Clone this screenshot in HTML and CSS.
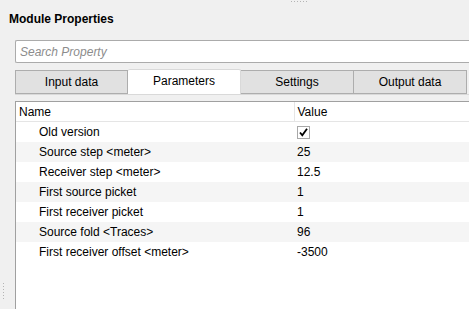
FILE: index.html
```html
<!DOCTYPE html>
<html lang="en">
<head>
  <meta charset="UTF-8">
  <title>Module Properties</title>
  <link rel="stylesheet" href="styles.css">
</head>
<body>
  <div class="grip-top"></div>
  <h1 class="title">Module Properties</h1>

  <div class="body-row">
    <div class="gutter">
      <div class="grip-left"></div>
    </div>

    <div class="main">
      <input class="search" type="text" placeholder="Search Property">

      <div class="tabs">
        <div class="tab">Input data</div>
        <div class="tab active">Parameters</div>
        <div class="tab">Settings</div>
        <div class="tab">Output data</div>
      </div>

      <div class="tab-frame">
        <div class="panel">
          <table class="props">
            <thead>
              <tr>
                <th class="col-name">Name</th>
                <th class="col-value">Value</th>
              </tr>
            </thead>
            <tbody>
              <tr>
                <td class="name">Old version</td>
                <td class="value">
                  <span class="check">
                    <svg width="11" height="11" viewBox="0 0 11 11">
                      <path d="M2 5.5 L4.3 8.3 L9 1.8" fill="none" stroke="#000" stroke-width="1.8"/>
                    </svg>
                  </span>
                </td>
              </tr>
              <tr><td class="name">Source step &lt;meter&gt;</td><td class="value">25</td></tr>
              <tr><td class="name">Receiver step &lt;meter&gt;</td><td class="value">12.5</td></tr>
              <tr><td class="name">First source picket</td><td class="value">1</td></tr>
              <tr><td class="name">First receiver picket</td><td class="value">1</td></tr>
              <tr><td class="name">Source fold &lt;Traces&gt;</td><td class="value">96</td></tr>
              <tr><td class="name">First receiver offset &lt;meter&gt;</td><td class="value">-3500</td></tr>
            </tbody>
          </table>
        </div>
      </div>
    </div>
  </div>
</body>
</html>
```

FILE: styles.css
```css
html, body {
  height: 100%;
}
body {
  margin: 0;
  background-color: #f0f0f0;
  font-family: "Liberation Sans", Arial, sans-serif;
  font-size: 12px;
  color: #000;
  overflow: hidden;
  display: flex;
  flex-direction: column;
}
.grip-top {
  height: 3px;
  width: 18px;
  margin-left: 290px;
  background-image: radial-gradient(circle, #b4b4b4 0.7px, transparent 0.8px);
  background-size: 3px 3px;
}
.title {
  margin: 8px 0 0 9px;
  font-size: 12px;
  line-height: 16px;
  font-weight: bold;
}
.body-row {
  flex: 1;
  display: flex;
  margin-top: 13px;
}
.gutter {
  width: 15px;
  flex-shrink: 0;
  display: flex;
  flex-direction: column;
  justify-content: flex-end;
  padding-bottom: 9px;
}
.grip-left {
  width: 3px;
  height: 18px;
  margin-left: 2px;
  background-image: radial-gradient(circle, #b4b4b4 0.7px, transparent 0.8px);
  background-size: 3px 3px;
}
.main {
  flex: 1;
  min-width: 0;
  display: flex;
  flex-direction: column;
}
.search {
  box-sizing: border-box;
  height: 23px;
  width: 100%;
  margin: 0;
  padding: 0 4px;
  border: 1px solid #ababab;
  border-right: none;
  border-radius: 2px 0 0 2px;
  background-color: #fff;
  font-family: "Liberation Sans", Arial, sans-serif;
  font-size: 12px;
  outline: none;
}
.search::placeholder {
  color: #8c8c8c;
  font-style: italic;
}
.tabs {
  display: flex;
  margin-top: 6px;
  height: 25px;
  align-items: flex-start;
}
.tab {
  box-sizing: border-box;
  width: 113px;
  height: 24px;
  margin-top: 1px;
  border: 1px solid #adadad;
  border-left: none;
  background-color: #e1e1e1;
  text-align: center;
  line-height: 22px;
}
.tab:first-child {
  border-left: 1px solid #adadad;
}
.tab.active {
  height: 26px;
  margin-top: 0;
  background-color: #fff;
  border-color: #d9d9d9;
  border-bottom: none;
  border-top-left-radius: 2px;
  border-top-right-radius: 2px;
}
.tab-frame {
  flex: 1;
  border-top: 1px solid #d9d9d9;
  padding-top: 6px;
  display: flex;
  flex-direction: column;
}
.panel {
  flex: 1;
  background-color: #fff;
  border-top: 1px solid #a0a0a0;
  border-left: 1px solid #a0a0a0;
}
.props {
  border-collapse: collapse;
  width: 100%;
  table-layout: fixed;
}
.props th {
  font-weight: normal;
  text-align: left;
  height: 18px;
  line-height: 18px;
  padding: 1px 0 0 3px;
  box-sizing: border-box;
  border-bottom: 1px solid #e5e5e5;
}
.props th.col-name {
  width: 278px;
  border-right: 1px solid #e5e5e5;
}
.props td {
  height: 20px;
  line-height: 19px;
  padding: 1px 0 0 0;
  box-sizing: border-box;
  vertical-align: middle;
  white-space: nowrap;
}
.props td.name {
  padding-left: 23px;
}
.props td.value {
  padding-left: 3px;
}
.props tbody tr:nth-child(even) td {
  background-color: #f5f5f5;
}
.check {
  box-sizing: border-box;
  display: flex;
  align-items: center;
  justify-content: center;
  width: 13px;
  height: 13px;
  border: 1px solid #a8a8a8;
  background-color: #fff;
}
```
